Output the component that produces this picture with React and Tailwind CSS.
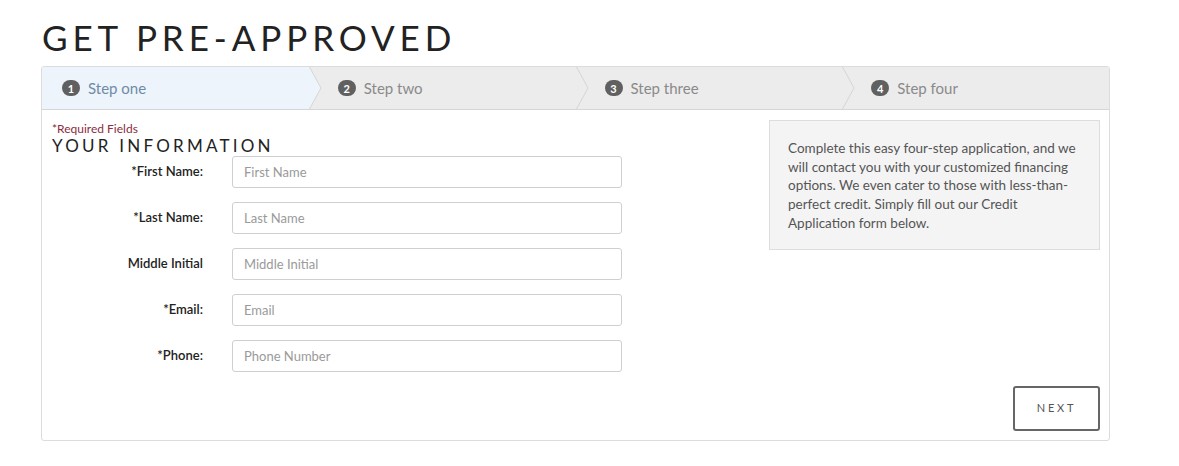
import React from 'react';

const steps = ['Step one', 'Step two', 'Step three', 'Step four'];

const fields = [
  { label: '*First Name:', placeholder: 'First Name' },
  { label: '*Last Name:', placeholder: 'Last Name' },
  { label: 'Middle Initial', placeholder: 'Middle Initial' },
  { label: '*Email:', placeholder: 'Email' },
  { label: '*Phone:', placeholder: 'Phone Number' },
];

function Chevron({ fill }) {
  return (
    <svg className="absolute top-0 right-[-13px] z-10 h-full w-[14px]" viewBox="0 0 14 43" preserveAspectRatio="none">
      <polygon points="0,0 1.5,0 13,21.5 1.5,43 0,43" fill={fill} />
      <polyline points="1.5,0 13,21.5 1.5,43" fill="none" stroke="#d4d4d4" strokeWidth="1" />
    </svg>
  );
}

export default function App() {
  return (
    <div className="min-h-screen bg-white pl-[41px] pr-[69px] pt-[17px] font-['Lato',sans-serif]">
      <h1 className="text-[35px] leading-[40px] font-normal tracking-[0.14em] text-[#222] pl-[1px]">
        GET PRE-APPROVED
      </h1>

      <div className="mt-[9px] rounded-[3px] border border-[#dcdcdc] overflow-hidden">
        {/* step tabs */}
        <div className="grid h-[43px] grid-cols-4 border-b border-[#d6d6d6] bg-[#ececec]">
          {steps.map((s, i) => {
            const active = i === 0;
            return (
              <div
                key={s}
                className={`relative flex items-center gap-[8px] ${i === 0 ? 'pl-[20px]' : 'pl-[29px]'} ${active ? 'bg-[#eef4fb]' : 'bg-[#ececec]'}`}
              >
                <span className="flex h-[16px] w-[18px] items-center justify-center rounded-full bg-[#606060] text-[11px] font-bold leading-none text-white">
                  {i + 1}
                </span>
                <span className={`text-[15px] ${active ? 'text-[#6f8ba6]' : 'text-[#8a8a8a]'}`}>{s}</span>
                {i < 3 && <Chevron fill={active ? '#eef4fb' : '#ececec'} />}
              </div>
            );
          })}
        </div>

        {/* body */}
        <div className="flex">
          <div className="pl-[10px] pt-[12px] pb-[68px]">
            <p className="text-[12px] leading-[14px] text-[#8c2c40]">*Required Fields</p>
            <h2 className="text-[17px] leading-[20px] tracking-[0.19em] text-[#222]">YOUR INFORMATION</h2>
            <div className="flex flex-col gap-[14px]">
              {fields.map((f) => (
                <div key={f.label} className="flex items-center">
                  <label className="w-[151px] text-right text-[13px] font-semibold text-[#222]">{f.label}</label>
                  <input
                    placeholder={f.placeholder}
                    className="ml-[29px] h-[32px] w-[390px] rounded-[3px] border border-[#cfcfcf] px-[11px] text-[13px] text-[#333] placeholder:text-[#9a9a9a] outline-none"
                  />
                </div>
              ))}
            </div>
          </div>

          <div className="ml-auto flex w-[331px] flex-col items-end pr-[9px] pt-[10px] pb-[9px] box-content">
            <div className="w-full border border-[#dddddd] bg-[#f4f4f4] px-[18px] pt-[18px] pb-[16px] text-[13.5px] leading-[18.7px] text-[#555]">
              Complete this easy four-step application, and we will contact you with your customized financing options. We even cater to those with less-than-perfect credit. Simply fill out our Credit Application form below.
            </div>
            <button className="mt-auto h-[45px] w-[87px] rounded-[3px] border-2 border-[#666] bg-white text-[11px] tracking-[0.25em] text-[#555]">
              NEXT
            </button>
          </div>
        </div>
      </div>
    </div>
  );
}
